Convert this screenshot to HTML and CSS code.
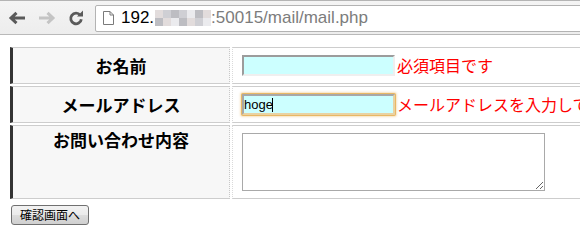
FILE: index.html
```html
<!DOCTYPE html>
<html lang="ja">
<head>
    <meta charset="UTF-8">
    <meta name="viewport" content="width=device-width, initial-scale=1.0">
    <title>お問い合わせ</title>
    <link rel="stylesheet" href="styles.css">
</head>
<body>
    <div class="toolbar">
        <span class="nav">
            <svg width="18" height="14" viewBox="0 0 18 14"><path d="M17 7H3.5M8.5 1.8L3 7l5.5 5.2" fill="none" stroke="#5a5a5a" stroke-width="3"/></svg>
        </span>
        <span class="nav">
            <svg width="18" height="14" viewBox="0 0 18 14"><path d="M1 7h13.5M9.5 1.8L15 7l-5.5 5.2" fill="none" stroke="#c4c4c4" stroke-width="3"/></svg>
        </span>
        <span class="nav">
            <svg width="16" height="16" viewBox="0 0 16 16"><path d="M12.2 5.2A5.3 5.3 0 1 0 13.3 9.2" fill="none" stroke="#5a5a5a" stroke-width="2.8"/><path d="M9 6.4h6V0.4z" fill="#5a5a5a"/></svg>
        </span>
        <div class="omnibox">
            <svg class="page-icon" width="11" height="14" viewBox="0 0 11 14"><path d="M0.5 0.5h6.5l3.5 3.5v9.5h-10z M7 0.5v3.5h3.5" fill="#fff" stroke="#7a7a7a"/></svg>
            <span class="host">192.</span>
            <span class="mosaic">
                <i class="m1"></i><i class="m2"></i><i class="m3"></i><i class="m2"></i><i class="m4"></i><i class="m3"></i><i class="m1"></i>
                <i class="m3"></i><i class="m1"></i><i class="m4"></i><i class="m3"></i><i class="m1"></i><i class="m2"></i><i class="m4"></i>
            </span>
            <span class="path">:50015/mail/mail.php</span>
        </div>
    </div>

    <div class="page">
        <form action="mail.php" method="post">
            <table class="form-table">
                <tr>
                    <th>お名前</th>
                    <td><input class="field" type="text" name="name"><span class="error">必須項目です</span></td>
                </tr>
                <tr>
                    <th>メールアドレス</th>
                    <td><span class="field-wrap"><input class="field focused" type="text" name="email" value="hoge"><span class="caret"></span></span><span class="error">メールアドレスを入力してください</span></td>
                </tr>
                <tr>
                    <th class="top">お問い合わせ内容</th>
                    <td><textarea class="message" name="message"></textarea></td>
                </tr>
            </table>
            <button type="submit" class="submit">確認画面へ</button>
        </form>
    </div>
</body>
</html>
```

FILE: styles.css
```css
html {
    overflow: hidden;
}

body {
    margin: 0;
    font-family: "Noto Sans CJK JP", sans-serif;
    background: #fff;
    color: #000;
}

/* browser chrome */
.toolbar {
    display: flex;
    align-items: center;
    border-top: 1px solid #b4b4b4;
    border-bottom: 1px solid #b9b9b9;
    background: linear-gradient(#f4f4f4, #ededed);
    box-sizing: border-box;
    height: 35px;
    padding-left: 8px;
}

.nav {
    width: 30px;
    display: flex;
    align-items: center;
}

.omnibox {
    flex: 1;
    height: 27px;
    margin-left: -3px;
    margin-right: -4px;
    margin-top: 1px;
    display: flex;
    align-items: center;
    background: #fff;
    border: 1px solid #b3b3b3;
    border-radius: 2px;
    box-sizing: border-box;
    padding-left: 7px;
    font-family: "Liberation Sans", Arial, sans-serif;
    font-size: 17px;
    white-space: nowrap;
}

.page-icon {
    margin-right: 7px;
}

.host {
    color: #000;
}

.mosaic {
    display: grid;
    grid-template-columns: repeat(7, 8px);
    grid-template-rows: 8px 8px;
    margin-left: 1px;
}

.mosaic i {
    display: block;
}

.m1 { background: #e2dcdc; }
.m2 { background: #cfcfd4; }
.m3 { background: #bdbdc2; }
.m4 { background: #ebebee; }

.path {
    color: #7c7c7c;
}

/* form */
.page {
    padding: 10px 8px 0;
}

.form-table {
    width: max-content;
    border-collapse: separate;
    border-spacing: 2px;
    margin: 0;
}

.form-table th {
    width: 200px;
    min-width: 200px;
    padding: 4px 8px;
    background: #f7f7f7;
    border-left: 3px solid #333;
    border-top: 1px solid #cdcdcd;
    border-bottom: 1px solid #cdcdcd;
    border-right: 1px dotted #c8c8c8;
    font-size: 17px;
    font-weight: bold;
    line-height: 20px;
    text-align: center;
    vertical-align: middle;
    white-space: nowrap;
}

.form-table th.top {
    vertical-align: top;
}

.form-table td {
    padding: 7px 9px;
    border-top: 1px solid #cdcdcd;
    border-bottom: 1px solid #cdcdcd;
    border-left: 1px dotted #dadada;
    white-space: nowrap;
    line-height: 21px;
    font-size: 16px;
    vertical-align: top;
}

.field-wrap {
    position: relative;
    display: inline-block;
    vertical-align: top;
}

.field {
    width: 153px;
    height: 21px;
    box-sizing: border-box;
    margin: 0;
    padding: 0;
    border: 2px solid;
    border-color: #9c9c9c #efefef #efefef #9c9c9c;
    background: #ccffff;
    font-family: "Liberation Sans", Arial, sans-serif;
    font-size: 13px;
    color: #000;
    vertical-align: top;
    outline: none;
}

.field.focused {
    border-color: #a8a8a8 #e9d2a2 #e9d2a2 #a8a8a8;
    box-shadow: 0 0 0 1px #e8b865, 0 0 2px 2px rgba(236, 190, 110, 0.45);
    border-radius: 1px;
}

.caret {
    position: absolute;
    left: 30px;
    top: 4px;
    width: 1px;
    height: 14px;
    background: #000;
}

.error {
    margin-left: 2px;
    color: #ff0000;
    vertical-align: top;
}

.message {
    display: block;
    width: 303px;
    height: 58px;
    box-sizing: border-box;
    margin: 0;
    border: 1px solid #a9a9a9;
}

.submit {
    margin: 3px 0 0 3px;
    height: 20px;
    padding: 0 8px;
    border: 1px solid #707070;
    border-radius: 3px;
    background: linear-gradient(#f2f2f2 0%, #ebebeb 50%, #dddddd 51%, #cfcfcf 100%);
    font-family: "Noto Sans CJK JP", sans-serif;
    font-size: 12px;
    line-height: 16px;
    color: #000;
}
```
